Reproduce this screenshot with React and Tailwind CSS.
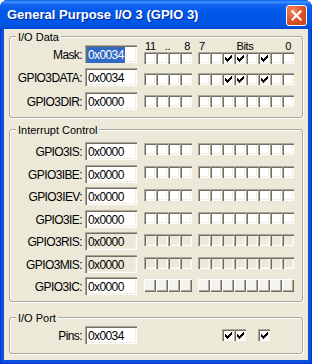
import React from 'react'

// ── Helpers ───────────────────────────────────────────────────────────────────

const SANS = "font-['Liberation_Sans',Arial,sans-serif]"

const SUNKEN =
  'shadow-[inset_1px_1px_0_#aca899,inset_2px_2px_0_#716f64,inset_-1px_-1px_0_#fff,inset_-2px_-2px_0_#f1efe2]'
const RAISED =
  'shadow-[inset_1px_1px_0_#fff,inset_-1px_-1px_0_#716f64,inset_-2px_-2px_0_#aca899]'

const bitsOf = (v) => Array.from({ length: 12 }, (_, i) => (v >> (11 - i)) & 1)

// ── Controls ──────────────────────────────────────────────────────────────────

function Check() {
  const tops = [2, 3, 4, 3, 2, 1, 0]
  return (
    <svg width="7" height="7" viewBox="0 0 7 7" shapeRendering="crispEdges">
      {tops.map((t, i) => (
        <rect key={i} x={i} y={t} width="1" height="3" fill="#000" />
      ))}
    </svg>
  )
}

function Box({ kind, on }) {
  if (kind === 'btn') {
    return <div className={`w-[12px] h-[13px] bg-[#f4f3ee] ${RAISED}`} />
  }
  const bg = kind === 'ro' ? 'bg-[#ece9d8]' : 'bg-white'
  return (
    <div className={`w-[12px] h-[12px] flex items-center justify-center pl-[1px] pt-[1px] ${bg} ${SUNKEN}`}>
      {on ? <Check /> : null}
    </div>
  )
}

function Bits({ value = 0, kind = 'edit', onlySet = false, className = '' }) {
  const b = bitsOf(value)
  const cell = (on, i) =>
    onlySet && !on ? <div key={i} className="w-[12px] h-[12px]" /> : <Box key={i} kind={kind} on={on} />
  return (
    <div className={`flex gap-[6px] ${className}`}>
      <div className="flex">{b.slice(0, 4).map((on, i) => cell(on, i))}</div>
      <div className="flex">{b.slice(4).map((on, i) => cell(on, i + 4))}</div>
    </div>
  )
}

function Label({ text }) {
  return (
    <div className={`w-[72px] h-[18px] pt-[3px] leading-[14px] text-right text-[12px] tracking-[-0.6px] text-black ${SANS}`}>
      {text}
    </div>
  )
}

function TextBox({ value, readOnly, selected }) {
  return (
    <div
      className={`ml-[3px] w-[52px] h-[18px] pl-[2px] pt-[3px] leading-[14px] text-[12px] tracking-[-0.6px] text-black ${SANS} ${
        readOnly ? 'bg-[#ece9d8]' : 'bg-white'
      } ${SUNKEN}`}
    >
      {selected ? (
        <span className="bg-[#316ac5] text-white px-[1px] py-[1px]">{value}</span>
      ) : (
        <span className="px-[1px]">{value}</span>
      )}
    </div>
  )
}

function Group({ title, className = '', children }) {
  return (
    <fieldset
      className={`rounded-[3px] border border-[#aca899] shadow-[inset_1px_1px_0_#fff,1px_1px_0_#fff] ${className}`}
    >
      <legend className={`ml-[6px] px-[2px] pt-[2px] leading-[12px] text-[11px] text-black bg-[#ece9d8] ${SANS}`}>
        {title}
      </legend>
      {children}
    </fieldset>
  )
}

// ── Data ──────────────────────────────────────────────────────────────────────

const interrupt = [
  { name: 'GPIO3IS:', mt: 'mt-[6px]', cb: 'mt-[1px]' },
  { name: 'GPIO3IBE:', mt: 'mt-[5px]', cb: 'mt-[1px]' },
  { name: 'GPIO3IEV:', mt: 'mt-[4px]', cb: 'mt-[2px]' },
  { name: 'GPIO3IE:', mt: 'mt-[5px]', cb: 'mt-[2px]' },
  { name: 'GPIO3RIS:', mt: 'mt-[4px]', cb: 'mt-[2px]', ro: true },
  { name: 'GPIO3MIS:', mt: 'mt-[5px]', cb: 'mt-[2px]', ro: true },
  { name: 'GPIO3IC:', mt: 'mt-[4px]', cb: 'mt-[2px]', btn: true },
]

// ── Página ────────────────────────────────────────────────────────────────────

export default function App() {
  return (
    <div className="w-[312px] h-[364px] bg-white">
      <div className="w-full h-full flex flex-col rounded-t-[8px] overflow-hidden bg-[#0a50da] shadow-[inset_1px_0_0_#0831d9,inset_-1px_0_0_#0831d9,inset_0_-1px_0_#0831d9]">
        {/* ── Title bar ── */}
        <div className="h-[29px] shrink-0 flex items-start justify-between bg-[linear-gradient(to_bottom,#0a5fe8_0%,#3d95ff_7%,#1266f2_16%,#0058e8_40%,#0055e4_85%,#0048d2_100%)]">
          <div
            className={`ml-[7px] mt-[7px] leading-[16px] text-[13px] font-bold text-white [text-shadow:1px_1px_0_#0a2aa0] ${SANS}`}
          >
            General Purpose I/O 3 (GPIO 3)
          </div>
          <div className="mt-[5px] mr-[5px] w-[21px] h-[21px] rounded-[3px] border border-white bg-[radial-gradient(circle_at_30%_25%,#f08a64_0%,#e0562a_45%,#c43c12_100%)] flex items-center justify-center">
            <svg width="11" height="11" viewBox="0 0 11 11">
              <path d="M1.5 1.5 L9.5 9.5 M9.5 1.5 L1.5 9.5" stroke="#fff" strokeWidth="2.2" strokeLinecap="square" />
            </svg>
          </div>
        </div>

        {/* ── Client area ── */}
        <div className="mx-[4px] mb-[4px] flex-1 bg-[#ece9d8] px-[5px]">
          {/* ── I/O Data ── */}
          <Group title="I/O Data" className="pb-[7px]">
            <div className="flex">
              <div className="flex flex-col mt-[2px]">
                <div className="flex">
                  <Label text="Mask:" />
                  <TextBox value="0x0034" selected />
                </div>
                <div className="flex mt-[5px]">
                  <Label text="GPIO3DATA:" />
                  <TextBox value="0x0034" />
                </div>
                <div className="flex mt-[6px]">
                  <Label text="GPIO3DIR:" />
                  <TextBox value="0x0000" />
                </div>
              </div>
              <div className="ml-[7px] -mt-[3px] flex flex-col">
                <div className={`flex gap-[6px] h-[12px] leading-[12px] text-[11px] tracking-[-0.4px] text-black ${SANS}`}>
                  <div className="w-[48px] grid grid-cols-3 pl-[1px] pr-[2px]">
                    <span className="text-left">11</span>
                    <span className="text-center">..</span>
                    <span className="text-right">8</span>
                  </div>
                  <div className="w-[96px] grid grid-cols-3 pl-[1px] pr-[3px]">
                    <span className="text-left">7</span>
                    <span className="text-center">Bits</span>
                    <span className="text-right">0</span>
                  </div>
                </div>
                <Bits value={0x34} />
                <Bits value={0x34} className="mt-[9px]" />
                <Bits value={0x0} className="mt-[10px]" />
              </div>
            </div>
          </Group>

          {/* ── Interrupt Control ── */}
          <Group title="Interrupt Control" className="mt-[4px] pb-[6px]">
            {interrupt.map((r) => (
              <div key={r.name} className={`flex items-start ${r.mt}`}>
                <Label text={r.name} />
                <TextBox value="0x0000" readOnly={r.ro} />
                <Bits value={0} kind={r.btn ? 'btn' : r.ro ? 'ro' : 'edit'} className={`ml-[7px] ${r.cb}`} />
              </div>
            ))}
          </Group>

          {/* ── I/O Port ── */}
          <Group title="I/O Port" className="mt-[8px] pb-[9px]">
            <div className="flex items-start mt-[2px]">
              <Label text="Pins:" />
              <TextBox value="0x0034" />
              <Bits value={0x34} onlySet className="ml-[7px] mt-[3px]" />
            </div>
          </Group>
        </div>
      </div>
    </div>
  )
}
